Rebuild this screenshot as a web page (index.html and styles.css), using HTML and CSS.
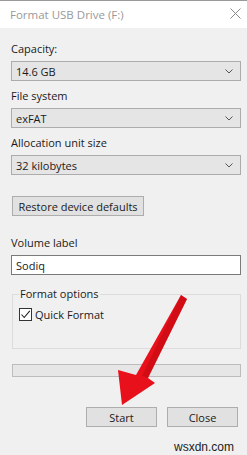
FILE: index.html
```html
<!DOCTYPE html>
<html>
<head>
<meta charset="utf-8">
<link rel="stylesheet" href="styles.css">
</head>
<body>
<div class="dialog">
  <div class="titlebar">
    <span class="title">Format USB Drive (F:)</span>
    <svg class="close" width="11" height="11" viewBox="0 0 11 11"><path d="M0.5 0.5 L10.5 10.5 M10.5 0.5 L0.5 10.5" stroke="#8a8a8a" stroke-width="1" fill="none"/></svg>
  </div>
  <div class="content">
    <div class="label first">Capacity:</div>
    <div class="combo"><span>14.6 GB</span><svg class="chev" width="8" height="5" viewBox="0 0 8 5"><path d="M0.5 0.5 L4 4 L7.5 0.5" stroke="#555" fill="none"/></svg></div>
    <div class="label">File system</div>
    <div class="combo"><span>exFAT</span><svg class="chev" width="8" height="5" viewBox="0 0 8 5"><path d="M0.5 0.5 L4 4 L7.5 0.5" stroke="#555" fill="none"/></svg></div>
    <div class="label">Allocation unit size</div>
    <div class="combo"><span>32 kilobytes</span><svg class="chev" width="8" height="5" viewBox="0 0 8 5"><path d="M0.5 0.5 L4 4 L7.5 0.5" stroke="#555" fill="none"/></svg></div>
    <div class="restore-row"><div class="btn restore">Restore device defaults</div></div>
    <div class="label vol">Volume label</div>
    <div class="input">Sodiq</div>
    <fieldset class="group">
      <legend>Format options</legend>
      <div class="check-row">
        <span class="checkbox"><svg width="11" height="11" viewBox="0 0 11 11"><path d="M1.5 5.5 L4.2 8.5 L9.8 1.8" stroke="#222" stroke-width="1.1" fill="none"/></svg></span>
        <span>Quick Format</span>
      </div>
    </fieldset>
    <div class="progress"></div>
    <div class="buttons">
      <div class="btn action">Start</div>
      <div class="btn action">Close</div>
    </div>
    <div class="watermark">wsxdn.com</div>
  </div>
  <svg class="arrow" width="247" height="455" viewBox="0 0 247 455">
    <polygon points="181,295 187,299 148,378 155,383 122,405 118,370 136,375" fill="#e8101a"/>
    <polygon points="181,295 187,299 148,378 142,376" fill="#b8080f" opacity="0.45"/>
  </svg>
</div>
</body>
</html>
```
FILE: styles.css
```css
* { box-sizing: border-box; }
html, body { margin: 0; padding: 0; }
body {
  width: 247px;
  height: 455px;
  background: #f0f0f0;
  font-family: "Open Sans", "Noto Sans", sans-serif;
  font-size: 11px;
  color: #1a1a1a;
  overflow: hidden;
}
.dialog { position: relative; width: 247px; height: 455px; }
.titlebar {
  height: 28px;
  background: #ffffff;
  border-top: 1px solid #9a9a9a;
  display: flex;
  align-items: center;
  justify-content: space-between;
  padding: 0 6px 0 10px;
}
.title { color: #999999; font-size: 11.5px; }
.close { margin-top: -2px; }
.content { padding: 0 6px 0 11px; display: flex; flex-direction: column; }
.label { line-height: 15px; height: 15px; margin-top: 7px; margin-bottom: 5px; }
.label.first { margin-top: 13px; }
.combo {
  height: 20px;
  background: #e5e5e5;
  border: 1px solid #acacac;
  display: flex;
  align-items: center;
  justify-content: space-between;
  padding: 0 7px 0 4px;
}
.restore-row { display: flex; margin-top: 21px; padding-left: 1px; }
.btn {
  height: 20px;
  background: #e1e1e1;
  border: 1px solid #adadad;
  display: flex;
  align-items: center;
  justify-content: center;
}
.restore { width: 132px; }
.label.vol { margin-top: 19px; }
.input {
  height: 20px;
  background: #ffffff;
  border: 1px solid #7a7a7a;
  display: flex;
  align-items: center;
  padding: 0 4px;
}
.group {
  margin: 12px 0 0 1px;
  border: 1px solid #dcdcdc;
  height: 62px;
  padding: 0 6px;
}
.group legend { padding: 0 1px; margin-left: 0; line-height: 14px; }
.check-row { display: flex; align-items: center; gap: 3px; margin-top: 6px; }
.checkbox {
  width: 13px; height: 13px;
  border: 1px solid #333;
  background: #fff;
  display: flex; align-items: center; justify-content: center;
}
.progress {
  margin: 15px 0 0 1px;
  height: 13px;
  background: #e6e6e6;
  border: 1px solid #bcbcbc;
}
.buttons { display: flex; justify-content: flex-end; gap: 10px; margin-top: 30px; padding-right: 3px; }
.action { width: 71px; }
.watermark { align-self: flex-end; margin-top: 13px; margin-right: 7px; font-family: "Liberation Sans", sans-serif; font-size: 12px; color: #222; }
.arrow { position: absolute; left: 0; top: 0; pointer-events: none; }
```
